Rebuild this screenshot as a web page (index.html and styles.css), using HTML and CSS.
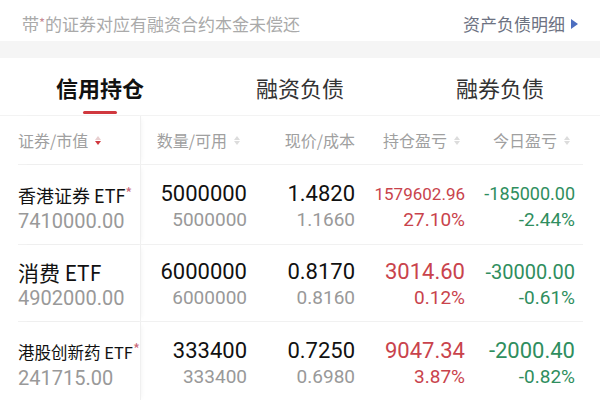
FILE: index.html
```html
<!DOCTYPE html>
<html lang="zh">
<head>
<meta charset="utf-8">
<link rel="stylesheet" href="styles.css">
</head>
<body>
<div class="notice">
  <span class="notice-text">带<span class="star">*</span>的证券对应有融资合约本金未偿还</span>
  <span class="notice-link">资产负债明细<span class="tri"></span></span>
</div>
<div class="band"></div>
<div class="tabs">
  <div class="tab active">信用持仓</div>
  <div class="tab">融资负债</div>
  <div class="tab">融券负债</div>
</div>
<div class="table">
  <div class="row head">
    <div class="cell c1"><span>证券/市值</span><span class="sort down"><i class="up"></i><i class="dn"></i></span></div>
    <div class="cell c2"><span>数量/可用</span><span class="sort"><i class="up"></i><i class="dn"></i></span></div>
    <div class="cell c3"><span>现价/成本</span></div>
    <div class="cell c4"><span>持仓盈亏</span><span class="sort"><i class="up"></i><i class="dn"></i></span></div>
    <div class="cell c5"><span>今日盈亏</span><span class="sort"><i class="up"></i><i class="dn"></i></span></div>
  </div>
  <div class="row body r1">
    <div class="cell c1"><div class="name n18">香港证券 ETF<span class="star">*</span></div><div class="sub">7410000.00</div></div>
    <div class="cell num"><div class="main">5000000</div><div class="sub">5000000</div></div>
    <div class="cell num"><div class="main">1.4820</div><div class="sub">1.1660</div></div>
    <div class="cell num red"><div class="main s17">1579602.96</div><div class="sub">27.10%</div></div>
    <div class="cell num green"><div class="main s18">-185000.00</div><div class="sub">-2.44%</div></div>
  </div>
  <div class="row body r2">
    <div class="cell c1"><div class="name n21">消费 ETF</div><div class="sub">4902000.00</div></div>
    <div class="cell num"><div class="main">6000000</div><div class="sub">6000000</div></div>
    <div class="cell num"><div class="main">0.8170</div><div class="sub">0.8160</div></div>
    <div class="cell num red"><div class="main">3014.60</div><div class="sub">0.12%</div></div>
    <div class="cell num green"><div class="main s20">-30000.00</div><div class="sub">-0.61%</div></div>
  </div>
  <div class="row body r3">
    <div class="cell c1"><div class="name n16">港股创新药 ETF<span class="star">*</span></div><div class="sub">241715.00</div></div>
    <div class="cell num"><div class="main">333400</div><div class="sub">333400</div></div>
    <div class="cell num"><div class="main">0.7250</div><div class="sub">0.6980</div></div>
    <div class="cell num red"><div class="main">9047.34</div><div class="sub">3.87%</div></div>
    <div class="cell num green"><div class="main">-2000.40</div><div class="sub">-0.82%</div></div>
  </div>
</div>
</body>
</html>
```
FILE: styles.css
```css
* { box-sizing: border-box; }
html, body { margin: 0; padding: 0; }
body {
  width: 600px;
  height: 400px;
  overflow: hidden;
  background: #fff;
  font-family: "Noto Sans CJK SC", "Noto Sans", sans-serif;
  color: #111;
}
.notice {
  height: 41px;
  display: flex;
  align-items: center;
  justify-content: space-between;
  padding: 6px 22px 0 22px;
  font-size: 17px;
}
.notice-text { color: #aaaaaa; }
.notice-text .star { color: #c98a95; font-size: 13px; vertical-align: 3px; }
.notice-link { color: #6d7282; display: flex; align-items: center; }
.tri {
  width: 0; height: 0;
  margin-left: 6px;
  border-top: 5px solid transparent;
  border-bottom: 5px solid transparent;
  border-left: 7px solid #4d6fc0;
}
.band { height: 17px; background: #f5f5f5; }
.tabs {
  height: 58px;
  display: grid;
  grid-template-columns: 200px 200px 200px;
  border-bottom: 1px solid #f3f3f3;
}
.tab {
  display: flex;
  align-items: center;
  justify-content: center;
  font-size: 22px;
  color: #333;
  position: relative;
}
.tab.active { font-weight: 700; color: #111; }
.tab.active::after {
  content: "";
  position: absolute;
  left: 83px;
  bottom: 1px;
  width: 34px;
  height: 3px;
  border-radius: 2px;
  background: #d0383e;
}
.table { margin-left: 18px; width: 565px; }
.row {
  display: grid;
  grid-template-columns: 122px 110px 110px 110px 110px;
  border-bottom: 1px solid #f1f1f1;
}
.row.head { height: 49px; }
.row.r1 { height: 80px; }
.row.r2 { height: 77px; }
.row.r3 { height: 80px; }
.cell { display: flex; }
.c1 { box-shadow: 1px 0 0 #f0f0f0, 4px 0 5px -3px rgba(0,0,0,0.06); }
.head .cell {
  align-items: center;
  font-size: 16px;
  color: #a0a0a0;
  justify-content: flex-end;
  padding-right: 10px;
}
.head .c1 { justify-content: flex-start; padding-right: 0; }
.head .c3 { padding-right: 5px; }
.sort {
  display: inline-flex;
  flex-direction: column;
  margin-left: 7px;
  gap: 1px;
}
.sort i {
  display: block;
  width: 0; height: 0;
  border-left: 3px solid transparent;
  border-right: 3px solid transparent;
}
.sort .up { border-bottom: 4px solid #dcdcdc; }
.sort .dn { border-top: 4px solid #dcdcdc; }
.sort.down .dn { border-top-color: #d0383e; }
.sort.down .up { border-bottom-color: #e8cfd0; }
.body .cell {
  flex-direction: column;
  justify-content: center;
  padding-top: 4px;
}
.body .c1 { align-items: flex-start; }
.name { color: #111; line-height: 26px; }
.name .star { color: #c96a7a; font-size: 15px; vertical-align: 4px; }
.n18 { font-size: 18px; }
.n21 { font-size: 21px; }
.n16 { font-size: 16.5px; }
.sub {
  font-family: "Roboto", "Noto Sans", sans-serif;
  font-size: 20px;
  color: #999;
  line-height: 26px;
}
.num { align-items: flex-end; padding-right: 5px; }
.body .cell:nth-child(2) { padding-right: 3px; }
.main {
  font-family: "Roboto", "Noto Sans", sans-serif;
  font-size: 22px;
  font-weight: 400;
  color: #111;
  line-height: 26px;
}
.num .sub { font-size: 19px; }
.red .main, .red .sub { color: #c9434c; }
.green .main, .green .sub { color: #2f8e5e; }
.main.s17 { font-size: 17px; }
.main.s18 { font-size: 18px; }
.main.s20 { font-size: 20px; }
```
